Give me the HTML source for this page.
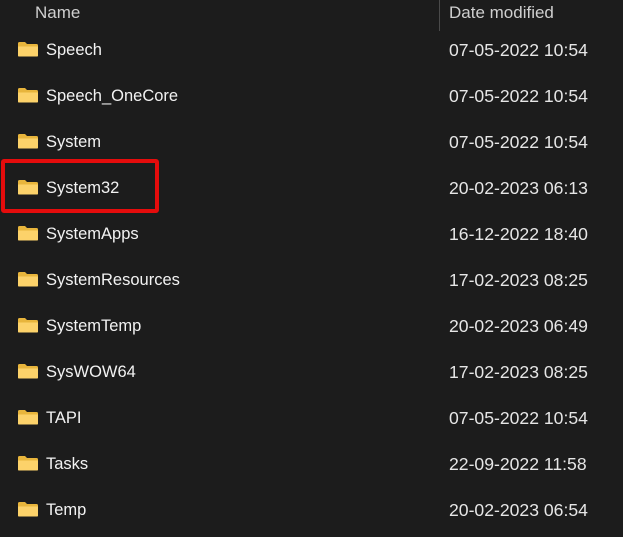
<!DOCTYPE html>
<html><head><style>
body{margin:0;width:623px;height:537px;background:#1c1c1c;overflow:hidden;font-family:"Liberation Sans",sans-serif;position:relative}
.t{position:absolute;font-size:17px;line-height:20px;white-space:nowrap}
.h{color:#cfcfcf}
.n{color:#f2f2f2;left:46px;font-size:16.5px}
.d{color:#e6e6e6;left:449px;font-size:17.6px}
.f{position:absolute;left:17px;width:22px;height:16px}
.div{position:absolute;left:439px;top:0;width:1px;height:31px;background:#4a4a4a}
.box{position:absolute;left:1px;top:159px;width:150px;height:46px;border:4px solid #e50c0c;border-radius:3px}
</style></head><body>
<div class="t h" style="left:35px;top:3px">Name</div>
<div class="div"></div>
<div class="t h" style="left:449px;top:3px">Date modified</div>
<div id="rows"></div>
<div class="box"></div>
<script>
var r=[["Speech","07-05-2022 10:54"],["Speech_OneCore","07-05-2022 10:54"],["System","07-05-2022 10:54"],["System32","20-02-2023 06:13"],["SystemApps","16-12-2022 18:40"],["SystemResources","17-02-2023 08:25"],["SystemTemp","20-02-2023 06:49"],["SysWOW64","17-02-2023 08:25"],["TAPI","07-05-2022 10:54"],["Tasks","22-09-2022 11:58"],["Temp","20-02-2023 06:54"]];
var h="";
r.forEach(function(x,i){var y=50+i*46;
h+='<svg class="f" style="top:'+(y-9)+'px" viewBox="0 0 22 16"><path d="M1 2.5Q1 1 2.5 1H8L10 3H19.5Q21 3 21 4.5V14.5Q21 15.5 20 15.5H2Q1 15.5 1 14.5Z" fill="#e8b53c"/><path d="M1 5.5H21V14.5Q21 15.5 20 15.5H2Q1 15.5 1 14.5Z" fill="#fcd26a"/></svg>';
h+='<div class="t n" style="top:'+(y-10)+'px">'+x[0]+'</div><div class="t d" style="top:'+(y-10)+'px">'+x[1]+'</div>';});
document.getElementById("rows").innerHTML=h;
</script>
</body></html>
